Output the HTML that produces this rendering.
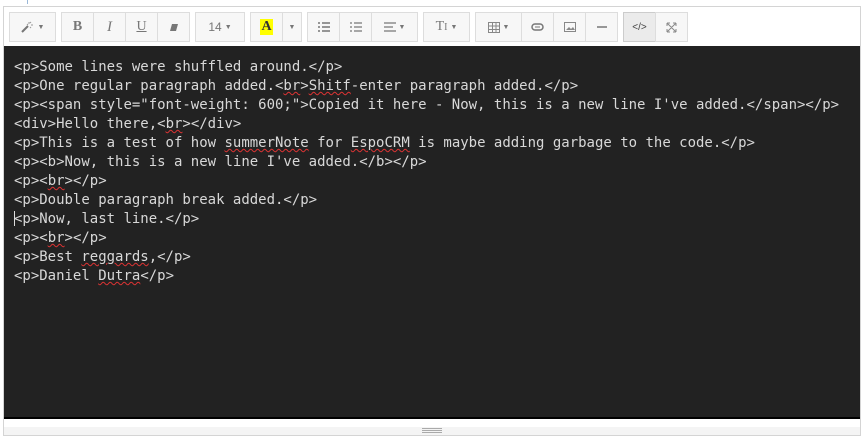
<!DOCTYPE html>
<html><head><meta charset="utf-8"><style>
*{box-sizing:border-box;margin:0;padding:0}
body{width:866px;height:442px;background:#fff;position:relative;overflow:hidden;font-family:"Liberation Sans",sans-serif}
.mark{position:absolute;left:27px;top:0;width:1px;height:4px;background:#9ab8d8}
.frame{position:absolute;left:3px;top:6px;width:858px;height:430px;border:1px solid #d4d4d4}
.btn{position:absolute;top:12px;height:30px;background:#f7f7f7;border:1px solid #ddd;color:#777;font-size:12px;display:flex;align-items:center;justify-content:center}
.act{background:#ebebeb;border-color:#ccc}
.car{font-size:7px;margin-left:3px;color:#777}
.ed{position:absolute;left:4px;top:46px;width:856px;height:373px;background:#222;border-bottom:2px solid #000}
pre{position:absolute;left:14px;top:58px;font-family:"DejaVu Sans Mono",monospace;font-size:13.99px;line-height:19px;color:#d8d8d8}
u{text-decoration:underline wavy #d33;text-decoration-thickness:1px;text-underline-offset:1px}
.status{position:absolute;left:4px;top:426px;width:856px;height:9px;background:#f4f4f4;border-top:1px solid #fff}
.grip{position:absolute;left:422px;top:428px;width:20px;height:5px;border-top:1px solid #aaa;border-bottom:1px solid #aaa}
.grip:after{content:"";position:absolute;left:0;right:0;top:1px;height:1px;background:#aaa}
.cur{position:absolute;left:14px;top:211px;width:1px;height:15px;background:#ddd}
</style></head><body>
<div class="mark"></div>
<div class="frame"></div>
<div class="btn" style="left:9px;width:47px"><svg width="14" height="12" viewBox="0 0 14 12"><path d="M1 11L7 5" stroke="#777" stroke-width="2"/><path d="M8 1v2M10 4h2M6 3l1 1M10 1l-1 1M9 6l1 1" stroke="#999" stroke-width="1"/></svg><span class="car">▼</span></div>
<div class="btn" style="left:61px;width:33px;font:bold 14px 'Liberation Serif',serif">B</div>
<div class="btn" style="left:93px;width:33px;font:italic 15px 'Liberation Serif',serif">I</div>
<div class="btn" style="left:125px;width:33px;font:14px 'Liberation Serif',serif;text-decoration:underline">U</div>
<div class="btn" style="left:157px;width:33px"><svg width="10" height="9"><path d="M3 1h6l-2 7H1z" fill="#777"/></svg></div>
<div class="btn" style="left:195px;width:50px;font-size:12px">14<span class="car">▼</span></div>
<div class="btn" style="left:250px;width:33px"><span style="background:#ff0;color:#333;font:bold 14px 'Liberation Serif',serif;padding:0 1px">A</span></div>
<div class="btn" style="left:282px;width:20px"><span class="car" style="margin:0">▼</span></div>
<div class="btn" style="left:307px;width:33px"><svg width="12" height="10"><path d="M0 1h2M4 1h8M0 5h2M4 5h8M0 9h2M4 9h8" stroke="#777" stroke-width="1.5"/></svg></div>
<div class="btn" style="left:339px;width:33px"><svg width="12" height="10"><path d="M4 1h8M4 5h8M4 9h8M0 1h2M0 5h2M0 9h2" stroke="#777" stroke-width="1.3"/></svg></div>
<div class="btn" style="left:371px;width:47px"><svg width="12" height="10"><path d="M0 1h12M0 5h9M0 9h12" stroke="#777" stroke-width="1.3"/></svg><span class="car">▼</span></div>
<div class="btn" style="left:423px;width:47px;font:14px 'Liberation Serif',serif">T<span style="font-size:10px">I</span><span class="car">▼</span></div>
<div class="btn" style="left:475px;width:47px"><svg width="12" height="11"><path d="M.5.5h11v10H.5zM4.5.5v10M8 .5v10M.5 4h11M.5 7.5h11" stroke="#888" fill="none"/></svg><span class="car">▼</span></div>
<div class="btn" style="left:521px;width:33px"><svg width="13" height="8"><rect x="1" y="1" width="11" height="6" rx="3" fill="none" stroke="#777" stroke-width="1.5"/><path d="M4 4h5" stroke="#777"/></svg></div>
<div class="btn" style="left:553px;width:33px"><svg width="12" height="10"><rect x=".5" y=".5" width="11" height="9" fill="none" stroke="#888"/><path d="M2 8l3-3 2 2 2-2 2 3z" fill="#888"/></svg></div>
<div class="btn" style="left:585px;width:33px"><svg width="10" height="2"><path d="M0 1h10" stroke="#777" stroke-width="1.5"/></svg></div>
<div class="btn act" style="left:623px;width:33px;font-size:10px;color:#444">&lt;/&gt;</div>
<div class="btn" style="left:655px;width:33px"><svg width="11" height="11"><path d="M1 1l9 9M10 1l-9 9M1 1h3M1 1v3M10 1h-3M10 1v3M1 10h3M1 10v-3M10 10h-3M10 10v-3" stroke="#888" stroke-width="1"/></svg></div>
<div class="ed"></div>
<pre>&lt;p&gt;Some lines were shuffled around.&lt;/p&gt;
&lt;p&gt;One regular paragraph added.&lt;<u>br</u>&gt;<u>Shitf</u>-enter paragraph added.&lt;/p&gt;
&lt;p&gt;&lt;span style="font-weight: 600;"&gt;Copied it here - Now, this is a new line I've added.&lt;/span&gt;&lt;/p&gt;
&lt;div&gt;Hello there,&lt;<u>br</u>&gt;&lt;/div&gt;
&lt;p&gt;This is a test of how <u>summerNote</u> for <u>EspoCRM</u> is maybe adding garbage to the code.&lt;/p&gt;
&lt;p&gt;&lt;b&gt;Now, this is a new line I've added.&lt;/b&gt;&lt;/p&gt;
&lt;p&gt;&lt;<u>br</u>&gt;&lt;/p&gt;
&lt;p&gt;Double paragraph break added.&lt;/p&gt;
&lt;p&gt;Now, last line.&lt;/p&gt;
&lt;p&gt;&lt;<u>br</u>&gt;&lt;/p&gt;
&lt;p&gt;Best <u>reggards</u>,&lt;/p&gt;
&lt;p&gt;Daniel <u>Dutra</u>&lt;/p&gt;</pre>
<div class="cur"></div>
<div class="status"></div>
<div class="grip"></div>
</body></html>
